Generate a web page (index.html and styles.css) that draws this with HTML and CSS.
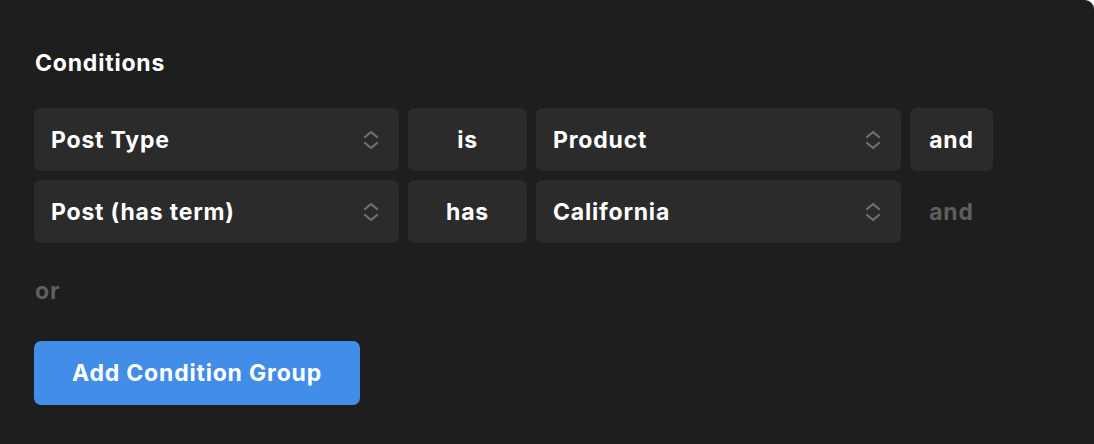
FILE: index.html
```html
<!DOCTYPE html>
<html>
<head>
	<title>Conditions</title>
	<link rel="stylesheet" href="styles.css">
</head>
<body>
	<div class="panel">
		<h2 class="title">Conditions</h2>

		<div class="group">
			<div class="row">
				<div class="select wide">
					<span>Post Type</span>
					<svg class="chevrons" width="18" height="22" viewBox="0 0 18 22"><path d="M3 8 L9 3 L15 8 M3 14 L9 19 L15 14" fill="none" stroke="#707070" stroke-width="2.2" stroke-linecap="round" stroke-linejoin="round"/></svg>
				</div>
				<div class="select op">is</div>
				<div class="select wide">
					<span>Product</span>
					<svg class="chevrons" width="18" height="22" viewBox="0 0 18 22"><path d="M3 8 L9 3 L15 8 M3 14 L9 19 L15 14" fill="none" stroke="#707070" stroke-width="2.2" stroke-linecap="round" stroke-linejoin="round"/></svg>
				</div>
				<div class="join active">and</div>
			</div>
			<div class="row">
				<div class="select wide">
					<span>Post (has term)</span>
					<svg class="chevrons" width="18" height="22" viewBox="0 0 18 22"><path d="M3 8 L9 3 L15 8 M3 14 L9 19 L15 14" fill="none" stroke="#707070" stroke-width="2.2" stroke-linecap="round" stroke-linejoin="round"/></svg>
				</div>
				<div class="select op">has</div>
				<div class="select wide">
					<span>California</span>
					<svg class="chevrons" width="18" height="22" viewBox="0 0 18 22"><path d="M3 8 L9 3 L15 8 M3 14 L9 19 L15 14" fill="none" stroke="#707070" stroke-width="2.2" stroke-linecap="round" stroke-linejoin="round"/></svg>
				</div>
				<div class="join">and</div>
			</div>
		</div>

		<div class="or">or</div>

		<button type="button" class="add-btn">Add Condition Group</button>
	</div>
</body>
</html>
```

FILE: styles.css
```css
body {
	margin: 0;
	background: #ffffff;
	font-family: Inter, "Noto Sans", sans-serif;
}
.panel {
	width: 1094px;
	height: 444px;
	box-sizing: border-box;
	background: #1e1e1e;
	border-radius: 0 9px 0 0;
	padding: 49px 34px 0 34px;
	color: #ffffff;
}
.title {
	margin: 0 0 0 1px;
	font-size: 23px;
	font-weight: 700;
	line-height: 28px;
	letter-spacing: 0.8px;
}
.group {
	margin-top: 31px;
	display: flex;
	flex-direction: column;
	gap: 9px;
}
.row {
	display: flex;
	gap: 9px;
}
.select {
	height: 63px;
	box-sizing: border-box;
	background: #2b2b2b;
	border-radius: 7px;
	display: flex;
	align-items: center;
	font-size: 23px;
	font-weight: 700;
	letter-spacing: 0.8px;
}
.wide {
	width: 365px;
	padding: 0 19px 0 17px;
	justify-content: space-between;
}
.op {
	width: 119px;
	justify-content: center;
}
.join {
	width: 83px;
	height: 63px;
	border-radius: 7px;
	display: flex;
	align-items: center;
	justify-content: center;
	font-size: 23px;
	font-weight: 700;
	letter-spacing: 0.8px;
	color: #5e5e5e;
}
.join.active {
	background: #2b2b2b;
	color: #ffffff;
}
.chevrons {
	display: block;
}
.or {
	margin: 36px 0 0 1px;
	font-size: 23px;
	font-weight: 700;
	letter-spacing: 0.8px;
	color: #5e5e5e;
	line-height: 24px;
}
.add-btn {
	margin-top: 38px;
	width: 326px;
	height: 64px;
	border: none;
	border-radius: 7px;
	background: #418de8;
	color: #ffffff;
	font-family: inherit;
	font-size: 23px;
	font-weight: 700;
	letter-spacing: 0.8px;
	cursor: pointer;
}
```
